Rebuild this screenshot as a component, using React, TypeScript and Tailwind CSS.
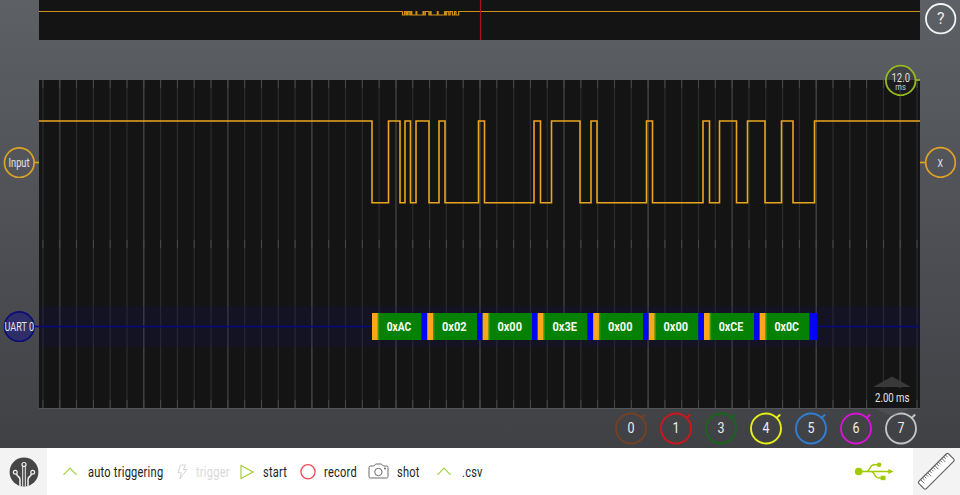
import React from "react";

const FONT = "font-['Roboto','Liberation_Sans',sans-serif]";

// x positions where the serial line changes level; the first one falls
const EDGES = [
  372, 388.5, 400, 405, 410.5, 416, 429, 439, 445, 478.5, 484.5, 534, 540.5, 551.5, 580, 591, 597, 646.5,
  652.5, 703, 709.5, 719.5, 736.5, 747.5, 765, 781.5, 793, 814.5,
];

function wavePath(from: number, to: number, high: number, low: number, map: (x: number) => number) {
  let d = `M${from} ${high}`;
  EDGES.forEach((x, i) => {
    d += `H${map(x).toFixed(2)}V${i % 2 === 0 ? low : high}`;
  });
  return d + `H${to}`;
}

const BYTES = [
  { x: 372, t: "0xAC" },
  { x: 427.3, t: "0x02" },
  { x: 482.7, t: "0x00" },
  { x: 537.7, t: "0x3E" },
  { x: 593.2, t: "0x00" },
  { x: 648.8, t: "0x00" },
  { x: 704, t: "0xCE" },
  { x: 759.7, t: "0x0C" },
];

const CHANNELS = [
  { n: "0", c: "#744125" },
  { n: "1", c: "#cf151c" },
  { n: "3", c: "#176619" },
  { n: "4", c: "#e9ee16" },
  { n: "5", c: "#2f7fd3" },
  { n: "6", c: "#d814d4" },
  { n: "7", c: "#c2c3c5" },
];

function Overview() {
  return (
    <svg className="block h-10 w-[881px] bg-[#141414]" viewBox="39 0 881 40">
      <path d={wavePath(39, 920, 11.5, 15, (x) => 402.5 + (x - 372) * 0.127)} fill="none" stroke="#cf9117" strokeWidth="1.2" />
      <path d="M480.5 0V40" stroke="#a81418" strokeWidth="1.2" />
    </svg>
  );
}

function Plot() {
  const lines = Array.from({ length: 53 }, (_, i) => i - 26);
  return (
    <svg className="block h-[329px] w-[881px] bg-[#141414]" viewBox="39 80 881 329">
      {lines.map((i) => {
        const x = 480 + i * 16.81;
        const major = i % 10 === 0;
        const mid = i % 5 === 0;
        return (
          <g key={i}>
            <path d={`M${x} 80V408`} stroke={major ? "#484848" : mid ? "#363636" : "#2b2b2b"} strokeWidth={mid && !major ? 1.8 : 1.3} />
            <path d={`M${x} 80v8M${x} 240v8M${x} 400v8`} stroke="#484848" strokeWidth="1" />
          </g>
        );
      })}
      <rect x="39" y="306" width="881" height="41" fill="#11105e" opacity=".22" />
      <path d="M39 326.5H920" stroke="#08087c" strokeWidth="1.5" />
      <path d="M39 408.5H920" stroke="#55565a" strokeWidth="1" />
      <path d={wavePath(39, 920, 121, 202.8, (x) => x)} fill="none" stroke="#eaa51e" strokeWidth="1.6" />
      {BYTES.map((b, i) => {
        const end = i < BYTES.length - 1 ? BYTES[i + 1].x : 817.7;
        const stop = i < BYTES.length - 1 ? end - 5.6 : 809.6;
        return (
          <g key={b.x}>
            <rect x={b.x} y="313" width={stop - b.x} height="27" fill="#058205" />
            <rect x={b.x + 5.5} y="313" width="1.7" height="27" fill="#34980b" />
            <rect x={b.x} y="313" width="5.7" height="27" fill="#fca619" />
            <rect x={stop} y="313" width={end - stop} height="27" fill="#0303f8" />
            <text x={b.x + 27} y="331" textAnchor="middle" textLength="24.5" lengthAdjust="spacingAndGlyphs" className={FONT} fontSize="12" fontWeight="700" fill="#f2fff2">
              {b.t}
            </text>
          </g>
        );
      })}
      <rect x="873" y="388" width="38" height="20" fill="#141414" />
      <path d="M873 387L892 376.5L911 387Z" fill="#393939" />
      <text x="875" y="401.5" textLength="34.5" lengthAdjust="spacingAndGlyphs" className={FONT} fontSize="12.5" fill="#e4e4e4">2.00 ms</text>
    </svg>
  );
}

function Knob({ n, c }: { n: string; c: string }) {
  return (
    <svg className="h-9 w-[34px] shrink-0" viewBox="0 0 34 36">
      <circle cx="17" cy="18.5" r="15" fill="none" stroke={c} strokeWidth="1.9" />
      <path d="M27.2 8.2L31.2 4.4" stroke={c} strokeWidth="2" />
      <text x="17" y="23.4" textAnchor="middle" textLength="7" lengthAdjust="spacingAndGlyphs" className={FONT} fontSize="14" fill="#ededed">{n}</text>
    </svg>
  );
}

function Label({ children, box, text = "text-[#222]" }: { children: React.ReactNode; box: string; text?: string }) {
  return (
    <span className={`${FONT} ${box} ${text} block whitespace-nowrap text-[14px] leading-5`}>
      <span className="inline-block origin-left scale-x-[0.79] tracking-[0.3px]">{children}</span>
    </span>
  );
}

function Chevron() {
  return (
    <svg className="h-4 w-4 shrink-0" viewBox="0 0 16 16" fill="none" stroke="#a5cf42" strokeWidth="1.2">
      <path d="M1.5 10.8L8 4.2L14.5 10.8" />
    </svg>
  );
}

function Toolbar() {
  return (
    <footer className="flex h-[47px] w-full bg-white">
      <div className="flex h-full w-[47px] items-center justify-center bg-[#f3f3f3]">
        <svg className="h-[30px] w-[30px]" viewBox="0 0 30 30">
          <circle cx="15" cy="15" r="14.4" fill="#464646" />
          <g fill="none" stroke="#f3f3f3" strokeWidth="1.5">
            <path d="M13.7 29.5V9.7M16.3 29.5V9.7" strokeWidth="1" />
            <path d="M11 29V22.5Q11 20.5 9.2 19.5L7.4 17.2M19 29V22.5Q19 20.5 20.8 19.5L22.6 17.2" />
            <circle cx="15" cy="7.5" r="2" strokeWidth="1.2" />
            <circle cx="6.3" cy="15.2" r="1.9" strokeWidth="1.2" />
            <circle cx="23.7" cy="15.2" r="1.9" strokeWidth="1.2" />
          </g>
        </svg>
      </div>
      <div className="flex flex-1 items-center pl-[15px]">
        <Chevron />
        <Label box="ml-2.5 w-[88px]">auto triggering</Label>
        <svg className="h-4 w-3 shrink-0" viewBox="0 0 12 16" fill="none" stroke="#d5d5d5" strokeWidth="1">
          <path d="M4.3 1H9.5L7.4 5.5H10.7L3.8 15L5.3 8.7H2.2Z" />
        </svg>
        <Label box="ml-2 w-[43px]" text="text-[#d9d9d9]">trigger</Label>
        <svg className="h-4 w-[15px] shrink-0" viewBox="0 0 15 16" fill="none" stroke="#a5cf42" strokeWidth="1.2">
          <path d="M2 1.5V14.5L14 8Z" />
        </svg>
        <Label box="ml-[9px] w-[37px]">start</Label>
        <svg className="h-4 w-4 shrink-0" viewBox="0 0 16 16" fill="none" stroke="#ef4b56" strokeWidth="1.3">
          <circle cx="8" cy="7.8" r="7.1" />
        </svg>
        <Label box="ml-2 w-11">record</Label>
        <svg className="h-[17px] w-[21px] shrink-0" viewBox="0 0 21 17" fill="none" stroke="#6b6b6b" strokeWidth="1">
          <path d="M2.5 3H5.8L7.7 1H13.4L15.3 3H18.5Q20 3 20 4.5V13.5Q20 15 18.5 15H2.5Q1 15 1 13.5V4.5Q1 3 2.5 3Z" />
          <circle cx="10.4" cy="9" r="3.7" />
          <path d="M16 5.5h2" strokeWidth="1.6" />
        </svg>
        <Label box="ml-2 w-[39px]">shot</Label>
        <Chevron />
        <Label box="ml-2.5 w-10">.csv</Label>
      </div>
      <div className="flex h-full items-center pr-[18px]">
        <svg className="h-[22px] w-[42px]" viewBox="0 0 42 23" fill="none" stroke="#a1cb00" strokeWidth="1.5">
          <circle cx="5" cy="11" r="4" fill="#a1cb00" stroke="none" />
          <path d="M5 11H37M13 11C17 11 16 4 21 4H25M18 11C22 11 21 17.7 26 17.7H29" />
          <path d="M36 8.4L41.5 11L36 13.6Z" fill="#a1cb00" stroke="none" />
          <circle cx="26.3" cy="4" r="2.4" fill="#a1cb00" stroke="none" />
          <rect x="28" y="15.4" width="5" height="4.6" fill="#a1cb00" stroke="none" />
        </svg>
      </div>
      <div className="flex h-full w-[47px] items-center justify-center bg-[#f3f3f3]">
        <svg className="h-[42px] w-[42px]" viewBox="0 0 42 42" fill="none" stroke="#666" strokeWidth="1.2">
          <g transform="translate(20.3 20.3) rotate(-45)">
            <rect x="-21" y="-5.2" width="42" height="10.4" rx="1.7" fill="#fff" />
            <path d="M-17 -5v5M-14.5 -5v3M-12 -5v3M-9.5 -5v3M-7 -5v5M-4.5 -5v3M-2 -5v3M.5 -5v3M3 -5v5M5.5 -5v3M8 -5v3M10.5 -5v3M13 -5v5M15.5 -5v3M18 -5v3" strokeWidth=".9" />
          </g>
        </svg>
      </div>
    </footer>
  );
}

export default function App() {
  return (
    <div className="flex h-[495px] w-[960px] flex-col overflow-hidden bg-white">
      <main className="flex h-[448px] bg-linear-to-b from-[#5d6065] to-[#404145]">
        <aside className="flex w-[39px] flex-col pt-[146px]">
          <svg className="block h-8 w-[39px]" viewBox="0 0 39 32">
            <circle cx="19.3" cy="16.7" r="14.8" fill="none" stroke="#dda326" strokeWidth="1.7" />
            <path d="M34 16.5H39" stroke="#dda326" strokeWidth="1.7" />
            <text x="8.5" y="20.9" textLength="21" lengthAdjust="spacingAndGlyphs" className={FONT} fontSize="12" fill="#e6e6e6">Input</text>
          </svg>
          <svg className="mt-[132px] block h-8 w-[39px]" viewBox="0 0 39 32">
            <circle cx="19.3" cy="16.7" r="14.8" fill="#2e2e68" stroke="#0c0c78" strokeWidth="1.7" />
            <path d="M34 16.5H39" stroke="#0c0c78" strokeWidth="1.7" />
            <text x="4.6" y="20.9" textLength="29.5" lengthAdjust="spacingAndGlyphs" className={FONT} fontSize="12" fill="#e6e6e6">UART 0</text>
          </svg>
        </aside>
        <section className="relative flex w-[881px] flex-col">
          <Overview />
          <div className="mt-10">
            <Plot />
          </div>
          <div className="flex justify-end gap-[11px] pr-0.5 pt-px">
            {CHANNELS.map((k) => (
              <Knob key={k.n} n={k.n} c={k.c} />
            ))}
          </div>
          <svg className="absolute right-2 top-[408px] h-2 w-10" viewBox="872 408 40 8">
            <path d="M873 408H911L892 416Z" fill="#56575b" opacity=".55" />
          </svg>
          <svg className="absolute right-0 top-16 h-8 w-9" viewBox="884 64 36 32">
            <circle cx="900.7" cy="80.5" r="14.8" fill="#232427" fillOpacity=".45" stroke="#95b91e" strokeWidth="1.8" />
            <path d="M915.5 80H920" stroke="#95b91e" strokeWidth="1.7" />
            <text x="891.5" y="82" textLength="18.5" lengthAdjust="spacingAndGlyphs" className={FONT} fontSize="12" fill="#dedede">12.0</text>
            <text x="895.3" y="90" textLength="10.5" lengthAdjust="spacingAndGlyphs" className={FONT} fontSize="9" fill="#d0d0d0">ms</text>
          </svg>
        </section>
        <aside className="flex w-10 flex-col pt-[3px]">
          <svg className="block h-8 w-10" viewBox="0 0 40 32">
            <circle cx="20.7" cy="15.7" r="14.7" fill="none" stroke="#f3f3f3" strokeWidth="1.8" />
            <text x="17" y="21.3" textLength="7.5" lengthAdjust="spacingAndGlyphs" className={FONT} fontSize="16" fill="#eee">?</text>
          </svg>
          <svg className="mt-[111px] block h-8 w-10" viewBox="0 0 40 32">
            <circle cx="20.5" cy="16.5" r="14.8" fill="none" stroke="#e0a126" strokeWidth="1.7" />
            <path d="M0 16.5H6" stroke="#e0a126" strokeWidth="1.7" />
            <text x="17.5" y="20.6" textLength="5.5" lengthAdjust="spacingAndGlyphs" className={FONT} fontSize="11.5" fill="#e2e2e2">X</text>
          </svg>
        </aside>
      </main>
      <Toolbar />
    </div>
  );
}
